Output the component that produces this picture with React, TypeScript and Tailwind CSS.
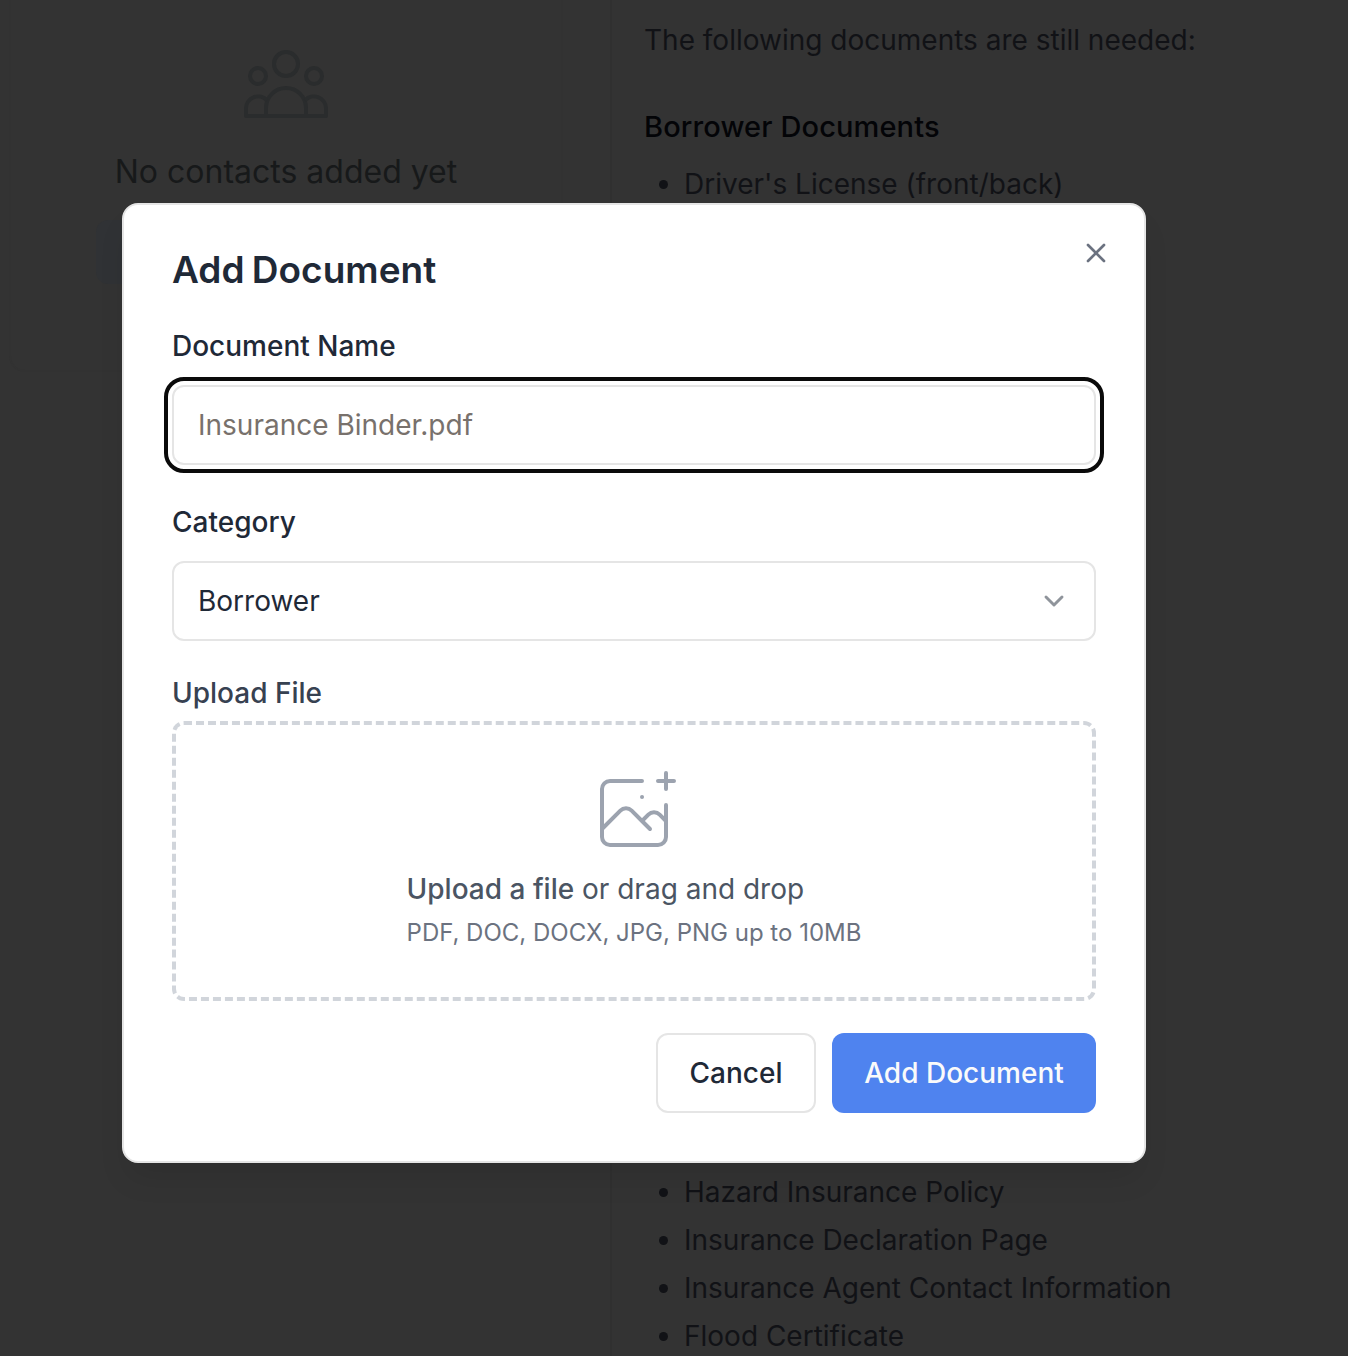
import React from "react";
import { ChevronDown, X } from "lucide-react";

const insuranceItems = [
  "Hazard Insurance Policy",
  "Insurance Declaration Page",
  "Insurance Agent Contact Information",
  "Flood Certificate",
];

function PeopleIcon() {
  return (
    <svg className="h-24 w-24 shrink-0" viewBox="0 0 96 96" fill="none" stroke="#2a2c2d" strokeWidth="4" strokeLinejoin="round">
      <circle cx="48" cy="28" r="12" />
      <circle cx="20" cy="40" r="8" />
      <circle cx="76" cy="40" r="8" />
      <path d="M28 80V72a20 20 0 0 1 40 0v8z" />
      <path d="M29 64.5A12 12 0 0 0 8 72v8h20M67 64.5A12 12 0 0 1 88 72v8H68" />
    </svg>
  );
}

function ImagePlusIcon() {
  return (
    <svg className="h-24 w-24" viewBox="0 0 48 48" fill="none" stroke="#9ca3af" strokeWidth="2" strokeLinecap="round" strokeLinejoin="round">
      <path d="M28 8H12a4 4 0 00-4 4v20m32-12v8m0 0v8a4 4 0 01-4 4H12a4 4 0 01-4-4v-4m32-4l-3.172-3.172a4 4 0 00-5.656 0L28 28M8 32l9.172-9.172a4 4 0 015.656 0L28 28m0 0l4 4m4-24h8m-4-4v8m-12 4h.02" />
    </svg>
  );
}

function Item({ children }: { children: React.ReactNode }) {
  return (
    <li className="flex h-12 items-center whitespace-nowrap">
      <span className="mr-4 ml-[15px] h-[9px] w-[9px] shrink-0 rounded-full bg-[#111216]" />
      {children}
    </li>
  );
}

function Backdrop() {
  return (
    <div className="flex h-full text-[28px] leading-[48px] text-[#111216]">
      <div className="w-[612px] shrink-0 border-r-2 border-[#303030] pl-[9px]">
        <div className="flex h-[372px] w-[554px] flex-col items-center rounded-b-[16px] border-x-2 border-b-2 border-[#323232] pt-9">
          <PeopleIcon />
          <p className="mt-4 text-[32px] leading-[48px] text-[#17191a]">No contacts added yet</p>
          <div className="mt-6 h-16 w-[380px] rounded-xl bg-[#303235]" />
        </div>
      </div>
      <div className="flex flex-1 flex-col pl-8">
        <p className="mt-4 whitespace-nowrap">The following documents are still needed:</p>
        <h3 className="mt-[39px] text-[29px] font-medium tracking-[0.12px] text-[#030407]">Borrower Documents</h3>
        <ul className="mt-[9px]">
          <Item>Driver's License (front/back)</Item>
        </ul>
        <ul className="mt-[960px]">
          {insuranceItems.map((item) => (
            <Item key={item}>{item}</Item>
          ))}
        </ul>
      </div>
    </div>
  );
}

function Dialog() {
  return (
    <div className="flex h-[960px] w-[1024px] flex-col rounded-[16px] border-2 border-[#e5e5e5] bg-white px-12 text-[28px] leading-[40px] text-[#1f2937] shadow-[0_20px_30px_-6px_rgba(0,0,0,0.1)]">
      <h2 className="mt-[45px] text-[37px] leading-[40px] font-semibold tracking-[0px] [word-spacing:-2px]">Add Document</h2>

      <label className="mt-9 font-medium">Document Name</label>
      <div className="mt-[19px] flex h-20 shrink-0 items-center rounded-xl border-2 border-[#e5e5e5] px-6 outline-4 outline-offset-4 outline-[#0a0a0a]">
        <input className="w-full outline-none placeholder:text-[#78716c]" placeholder="Insurance Binder.pdf" />
      </div>

      <label className="mt-[37px] font-medium">Category</label>
      <div className="mt-[19px] flex h-20 shrink-0 items-center justify-between rounded-xl border-2 border-[#e5e5e5] px-6">
        <span>Borrower</span>
        <ChevronDown className="h-8 w-8 text-[#8f949b]" strokeWidth={2.2} />
      </div>

      <p className="mt-8 font-medium text-[#374151]">Upload File</p>
      <div className="mt-2 flex h-[280px] shrink-0 flex-col items-center rounded-xl border-4 border-dashed border-[#d1d5db] pt-10">
        <ImagePlusIcon />
        <div className="mt-2">
          <p className="text-[#4b5563]">
            <span className="font-medium">Upload a file</span> or drag and drop
          </p>
          <p className="mt-2 text-[24px] leading-[32px] text-[#6b7280]">PDF, DOC, DOCX, JPG, PNG up to 10MB</p>
        </div>
      </div>

      <div className="mt-8 flex justify-end gap-4 font-medium">
        <button className="h-20 w-40 rounded-xl border-2 border-[#e5e5e5]">Cancel</button>
        <button className="h-20 w-[264px] rounded-xl bg-[#4f83ef] text-[#fafafa]">Add Document</button>
      </div>
    </div>
  );
}

export default function App() {
  return (
    <main className="relative h-[1356px] w-[1348px] overflow-hidden bg-[#333333] font-['Inter',sans-serif]">
      <Backdrop />
      <div className="absolute top-[203px] left-[122px]">
        <Dialog />
        <button aria-label="Close" className="absolute top-[34px] right-[34px]">
          <X className="h-8 w-8 text-[#6b7280]" strokeWidth={2} />
        </button>
      </div>
    </main>
  );
}
